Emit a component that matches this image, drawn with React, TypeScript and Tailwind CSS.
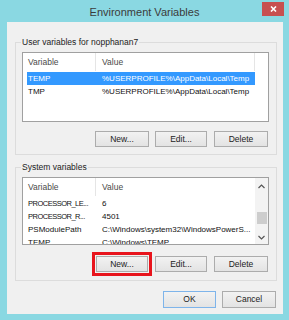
import React from "react";

const font = { fontFamily: '"Liberation Sans", Arial, sans-serif' };

function Btn({ label, w, extra = "" }: { label: string; w: string; extra?: string }) {
  return (
    <div
      className={`h-[16px] ${w} flex items-center justify-center border border-[#acacac] bg-gradient-to-b from-[#f2f2f2] to-[#e3e3e3] text-[8.5px] text-[#222] leading-none ${extra}`}
    >
      {label}
    </div>
  );
}

type Row = [string, string];

function ListView({
  rows,
  h,
  selected,
  scroll,
}: {
  rows: Row[];
  h: string;
  selected?: number;
  scroll?: boolean;
}) {
  return (
    <div className={`w-[247px] ${h} border border-[#a0a0a0] bg-white flex overflow-hidden`}>
      <div className="flex-1 flex flex-col min-w-0">
        <div className="h-[18px] flex shrink-0 text-[8.5px] text-[#4a4a4a] leading-none">
          <div className="w-[73px] border-r border-[#e5e5e5] flex items-center pl-[5px]">Variable</div>
          <div className={`${scroll ? "flex-1" : "w-[159px] border-r border-[#e5e5e5]"} flex items-center pl-[6px]`}>Value</div>
        </div>
        <div className="h-[1px] shrink-0" />
        {rows.map((r, i) => (
          <div
            key={i}
            className={`h-[13px] shrink-0 flex text-[8px] leading-none ${
              i === selected ? "bg-[#3399ff] text-white ml-[4px] w-[228px]" : "text-[#111]"
            }`}
          >
            <div
              className={`${i === selected ? "w-[69px] pl-[1px]" : "w-[73px] pl-[5px]"} flex items-center whitespace-nowrap ${
                r[0].length > 12 ? "tracking-[-0.5px] text-[7.5px]" : ""
              }`}
            >
              {r[0]}
            </div>
            <div className="flex-1 flex items-center pl-[6px] whitespace-nowrap">{r[1]}</div>
          </div>
        ))}
      </div>
      {scroll ? (
        <div className="w-[13px] shrink-0 bg-[#f3f3f3] flex flex-col items-center">
          <div className="h-[16px] w-full flex items-center justify-center">
            <svg width="7" height="5" viewBox="0 0 7 5">
              <path d="M0.5 4 L3.5 1 L6.5 4" fill="none" stroke="#555" strokeWidth="1.2" />
            </svg>
          </div>
          <div className="h-[18px]" />
          <div className="h-[12px] w-[10px] bg-[#cdcdcd]" />
          <div className="flex-1" />
          <div className="h-[14px] w-full flex items-center justify-center">
            <svg width="7" height="5" viewBox="0 0 7 5">
              <path d="M0.5 1 L3.5 4 L6.5 1" fill="none" stroke="#555" strokeWidth="1.2" />
            </svg>
          </div>
        </div>
      ) : null}
    </div>
  );
}

function Group({
  label,
  h,
  children,
  extra = "",
}: {
  label: string;
  h: string;
  children: React.ReactNode;
  extra?: string;
}) {
  return (
    <div className={`relative w-[262px] ${h} border border-[#dcdcdc] ${extra}`}>
      <div className="absolute -top-[7px] left-[5px] bg-[#f0f0f0] px-[1px] text-[8.5px] leading-[12px] text-[#222] whitespace-nowrap">
        {label}
      </div>
      {children}
    </div>
  );
}

export default function App() {
  return (
    <div className="w-[289px] h-[320px] bg-[#8ad8e2] flex flex-col overflow-hidden" style={font}>
      <div className="relative h-[22px] shrink-0 flex items-center justify-center">
        <span className="text-[11px] text-[#3b3b3b] leading-none mt-[2px]">Environment Variables</span>
        <div className="absolute left-[262px] top-[2px] w-[22px] h-[14px] bg-[#c75050] flex items-center justify-center">
          <svg width="7" height="6" viewBox="0 0 7 6">
            <path d="M1 0.5 L6 5.5 M6 0.5 L1 5.5" stroke="#fff" strokeWidth="1.6" />
          </svg>
        </div>
      </div>
      <div className="ml-[7px] w-[276px] h-[292px] bg-[#f0f0f0] flex flex-col pl-[8px] pt-[20px]">
        <Group label="User variables for nopphanan7" h="h-[113px]">
          <div className="pl-[6px] pt-[9px]">
            <ListView
              h="h-[70px]"
              selected={0}
              rows={[
                ["TEMP", "%USERPROFILE%\\AppData\\Local\\Temp"],
                ["TMP", "%USERPROFILE%\\AppData\\Local\\Temp"],
              ]}
            />
          </div>
          <div className="flex pl-[79px] mt-[9px]">
            <Btn label="New..." w="w-[54px]" />
            <Btn label="Edit..." w="w-[52px]" extra="ml-[6px]" />
            <Btn label="Delete" w="w-[54px]" extra="ml-[7px]" />
          </div>
        </Group>
        <Group label="System variables" h="h-[114px]" extra="mt-[12px]">
          <div className="pl-[6px] pt-[9px]">
            <ListView
              h="h-[68px]"
              scroll
              rows={[
                ["PROCESSOR_LE...", "6"],
                ["PROCESSOR_R...", "4501"],
                ["PSModulePath", "C:\\Windows\\system32\\WindowsPowerS..."],
                ["TEMP", "C:\\Windows\\TEMP"],
              ]}
            />
          </div>
          <div className="flex pl-[76px] mt-[7px] items-center">
            <div className="border-[3px] border-[#e8141c] p-[1px]">
              <Btn label="New..." w="w-[52px]" />
            </div>
            <Btn label="Edit..." w="w-[52px]" extra="ml-[3px]" />
            <Btn label="Delete" w="w-[54px]" extra="ml-[7px]" />
          </div>
        </Group>
        <div className="flex mt-[10px] pl-[148px]">
          <Btn label="OK" w="w-[53px]" extra="!border-[#7eb4ea] h-[17px]" />
          <Btn label="Cancel" w="w-[54px]" extra="ml-[6px] h-[17px]" />
        </div>
      </div>
    </div>
  );
}
